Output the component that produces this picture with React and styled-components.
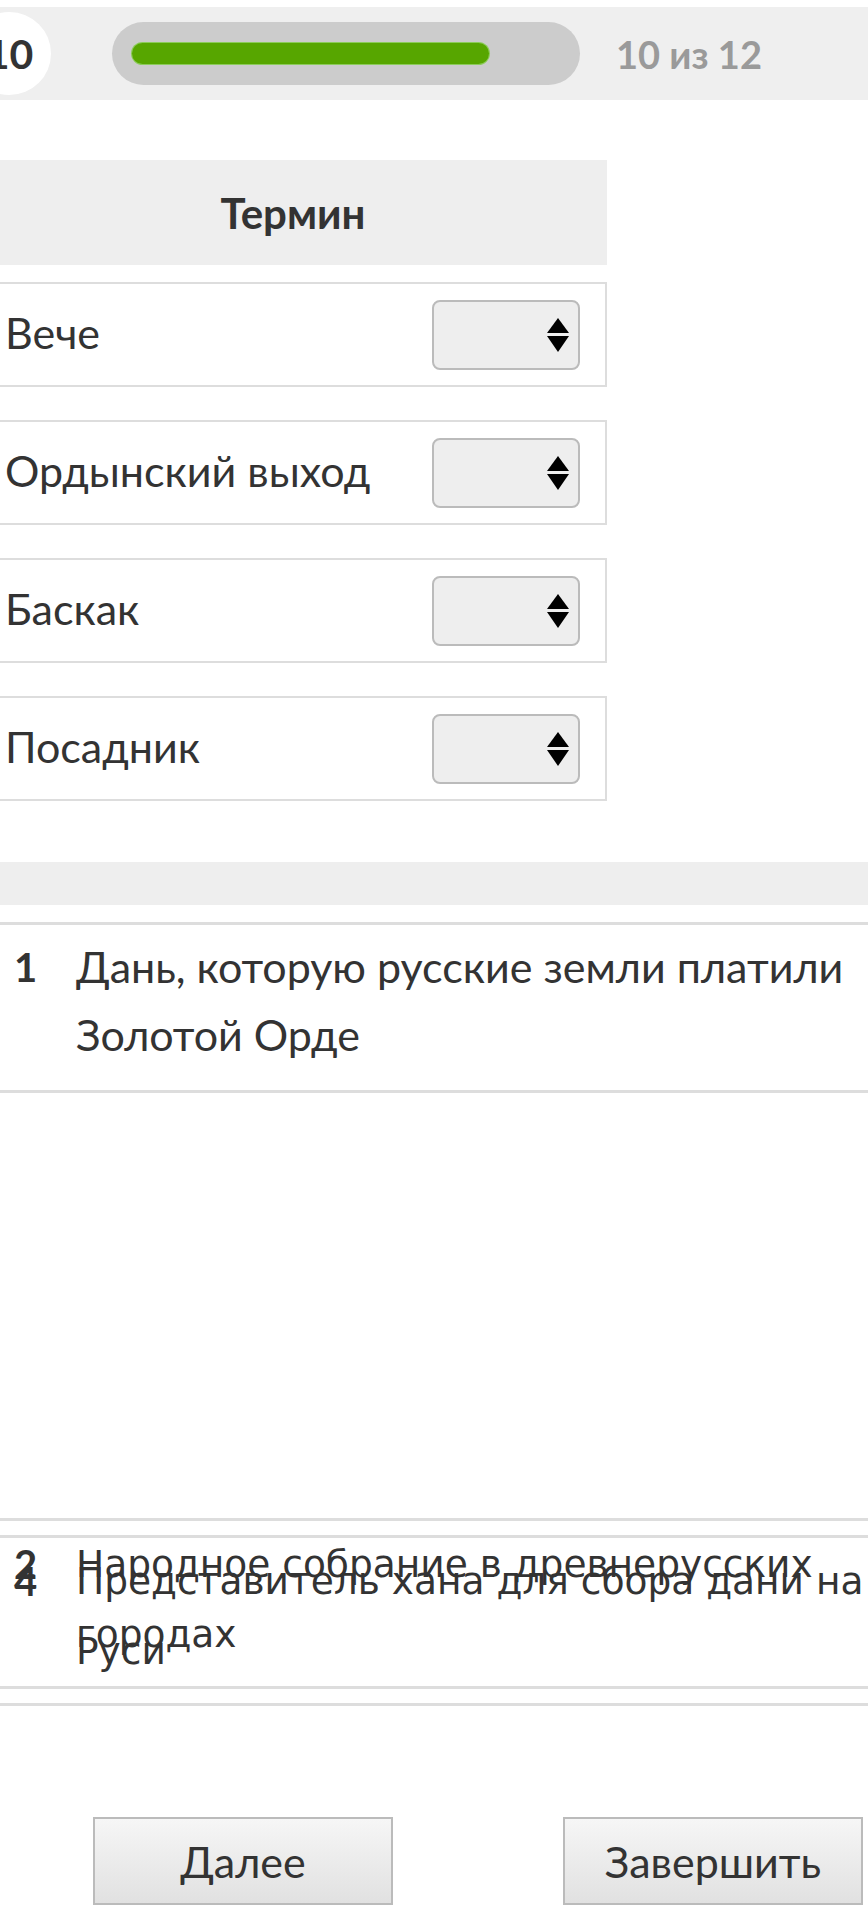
import React from "react";
import styled, { createGlobalStyle } from "styled-components";

const terms = ["Вече", "Ордынский выход", "Баскак", "Посадник"];

const GlobalStyle = createGlobalStyle`
  html, body {
    margin: 0;
    padding: 0;
    background: #fff;
  }
  body {
    font-family: Lato, "Open Sans", sans-serif;
    color: #333;
    overflow: hidden;
  }
`;

const Page = styled.div`
  width: 868px;
  height: 1920px;
  overflow: hidden;
  padding-top: 7px;
  box-sizing: border-box;
`;

const ProgressBar = styled.div`
  height: 93px;
  background: #efefef;
  display: flex;
  align-items: center;
`;

const StepBadge = styled.div`
  flex-shrink: 0;
  width: 83px;
  height: 83px;
  margin-left: -32px;
  border-radius: 50%;
  background: #fff;
  display: flex;
  align-items: center;
  justify-content: center;
  font-size: 41px;
  font-weight: 700;
  color: #333;
`;

const Track = styled.div`
  width: 468px;
  height: 63px;
  margin-left: 61px;
  padding: 21px 20px;
  box-sizing: border-box;
  border-radius: 32px;
  background: #ccc;
`;

const Fill = styled.div`
  height: 21px;
  border-radius: 11px;
  background: #57a600;
  box-shadow: 0 0 0 1px #8ccc5a;
`;

const Counter = styled.div`
  margin-left: 36px;
  font-size: 38px;
  font-weight: 700;
  color: #9a9a9a;
`;

const Table = styled.div`
  width: 628px;
  margin: 60px 0 0 -21px;
  display: flex;
  flex-direction: column;
`;

const HeadCell = styled.div`
  height: 105px;
  margin-bottom: 17px;
  background: #eee;
  display: flex;
  align-items: center;
  justify-content: center;
  font-size: 42px;
  font-weight: 700;
`;

const Rows = styled.div`
  display: flex;
  flex-direction: column;
  gap: 33px;
`;

const Row = styled.div`
  height: 105px;
  box-sizing: border-box;
  border: 2px solid #ddd;
  padding: 0 25px 5px 24px;
  display: flex;
  align-items: center;
  justify-content: space-between;
  font-size: 43px;
`;

const SelectWrap = styled.div`
  display: grid;
  width: 148px;
  height: 70px;
  margin-top: 5px;
`;

const Select = styled.select`
  grid-area: 1 / 1;
  appearance: none;
  width: 100%;
  height: 100%;
  margin: 0;
  box-sizing: border-box;
  border: 2px solid #bbb;
  border-radius: 8px;
  background: #eee;
`;

const Arrows = styled.svg`
  grid-area: 1 / 1;
  align-self: center;
  justify-self: end;
  margin-right: 11px;
  pointer-events: none;
`;

const Band = styled.div`
  height: 43px;
  margin-top: 61px;
  background: #eee;
`;

const List = styled.div`
  position: relative;
  height: 785px;
  margin-top: 17px;
`;

const Item = styled.div`
  height: 171px;
  box-sizing: border-box;
  border-top: 3px solid #ddd;
  border-bottom: 3px solid #ddd;
  padding: 8px 4px 0 14px;
  display: flex;
  font-size: 43px;
  line-height: 68px;
  background: #fff;
`;

const FloatingItem = styled(Item)`
  position: absolute;
  left: 0;
  right: 0;
  top: ${(p) => p.$top}px;
  padding-right: 0;
  background: transparent;
  font-family: "DejaVu Sans", sans-serif;
  font-size: 37.5px;
  line-height: 70px;
`;

const Num = styled.span`
  flex-shrink: 0;
  width: 62px;
  font-family: Lato, sans-serif;
  font-size: 40px;
  font-weight: 700;
`;

const Buttons = styled.div`
  margin-top: 110px;
  padding-left: 93px;
  display: flex;
  gap: 170px;
`;

const Button = styled.button`
  width: 300px;
  height: 88px;
  border: 2px solid #bbb;
  border-radius: 0;
  background: linear-gradient(#f6f6f6, #e1e1e1);
  font-family: Lato, sans-serif;
  font-size: 43px;
  color: #333;
`;

function SortArrows() {
  return (
    <Arrows width="22" height="34" viewBox="0 0 22 34">
      <path d="M11 0 L22 15 L0 15 Z" fill="#000" />
      <path d="M0 18 L22 18 L11 34 Z" fill="#000" />
    </Arrows>
  );
}

export default function App() {
  const step = 10;
  const total = 12;
  return (
    <Page>
      <GlobalStyle />
      <ProgressBar>
        <StepBadge>{step}</StepBadge>
        <Track>
          <Fill style={{ width: `${(step / total) * 100}%` }} />
        </Track>
        <Counter>
          {step} из {total}
        </Counter>
      </ProgressBar>

      <Table>
        <HeadCell>Термин</HeadCell>
        <Rows>
          {terms.map((t) => (
            <Row key={t}>
              <span>{t}</span>
              <SelectWrap>
                <Select defaultValue="">
                  <option value=""></option>
                  <option value="1">1</option>
                  <option value="2">2</option>
                  <option value="3">3</option>
                  <option value="4">4</option>
                </Select>
                <SortArrows />
              </SelectWrap>
            </Row>
          ))}
        </Rows>
      </Table>

      <Band />
      <List>
        <Item>
          <Num>1</Num>
          <span>Дань, которую русские земли платили Золотой Орде</span>
        </Item>
        <FloatingItem $top={596}>
          <Num>2</Num>
          <span>Народное собрание в древнерусских городах</span>
        </FloatingItem>
        <FloatingItem $top={613}>
          <Num>4</Num>
          <span>Представитель хана для сбора дани на Руси</span>
        </FloatingItem>
      </List>

      <Buttons>
        <Button>Далее</Button>
        <Button>Завершить</Button>
      </Buttons>
    </Page>
  );
}
